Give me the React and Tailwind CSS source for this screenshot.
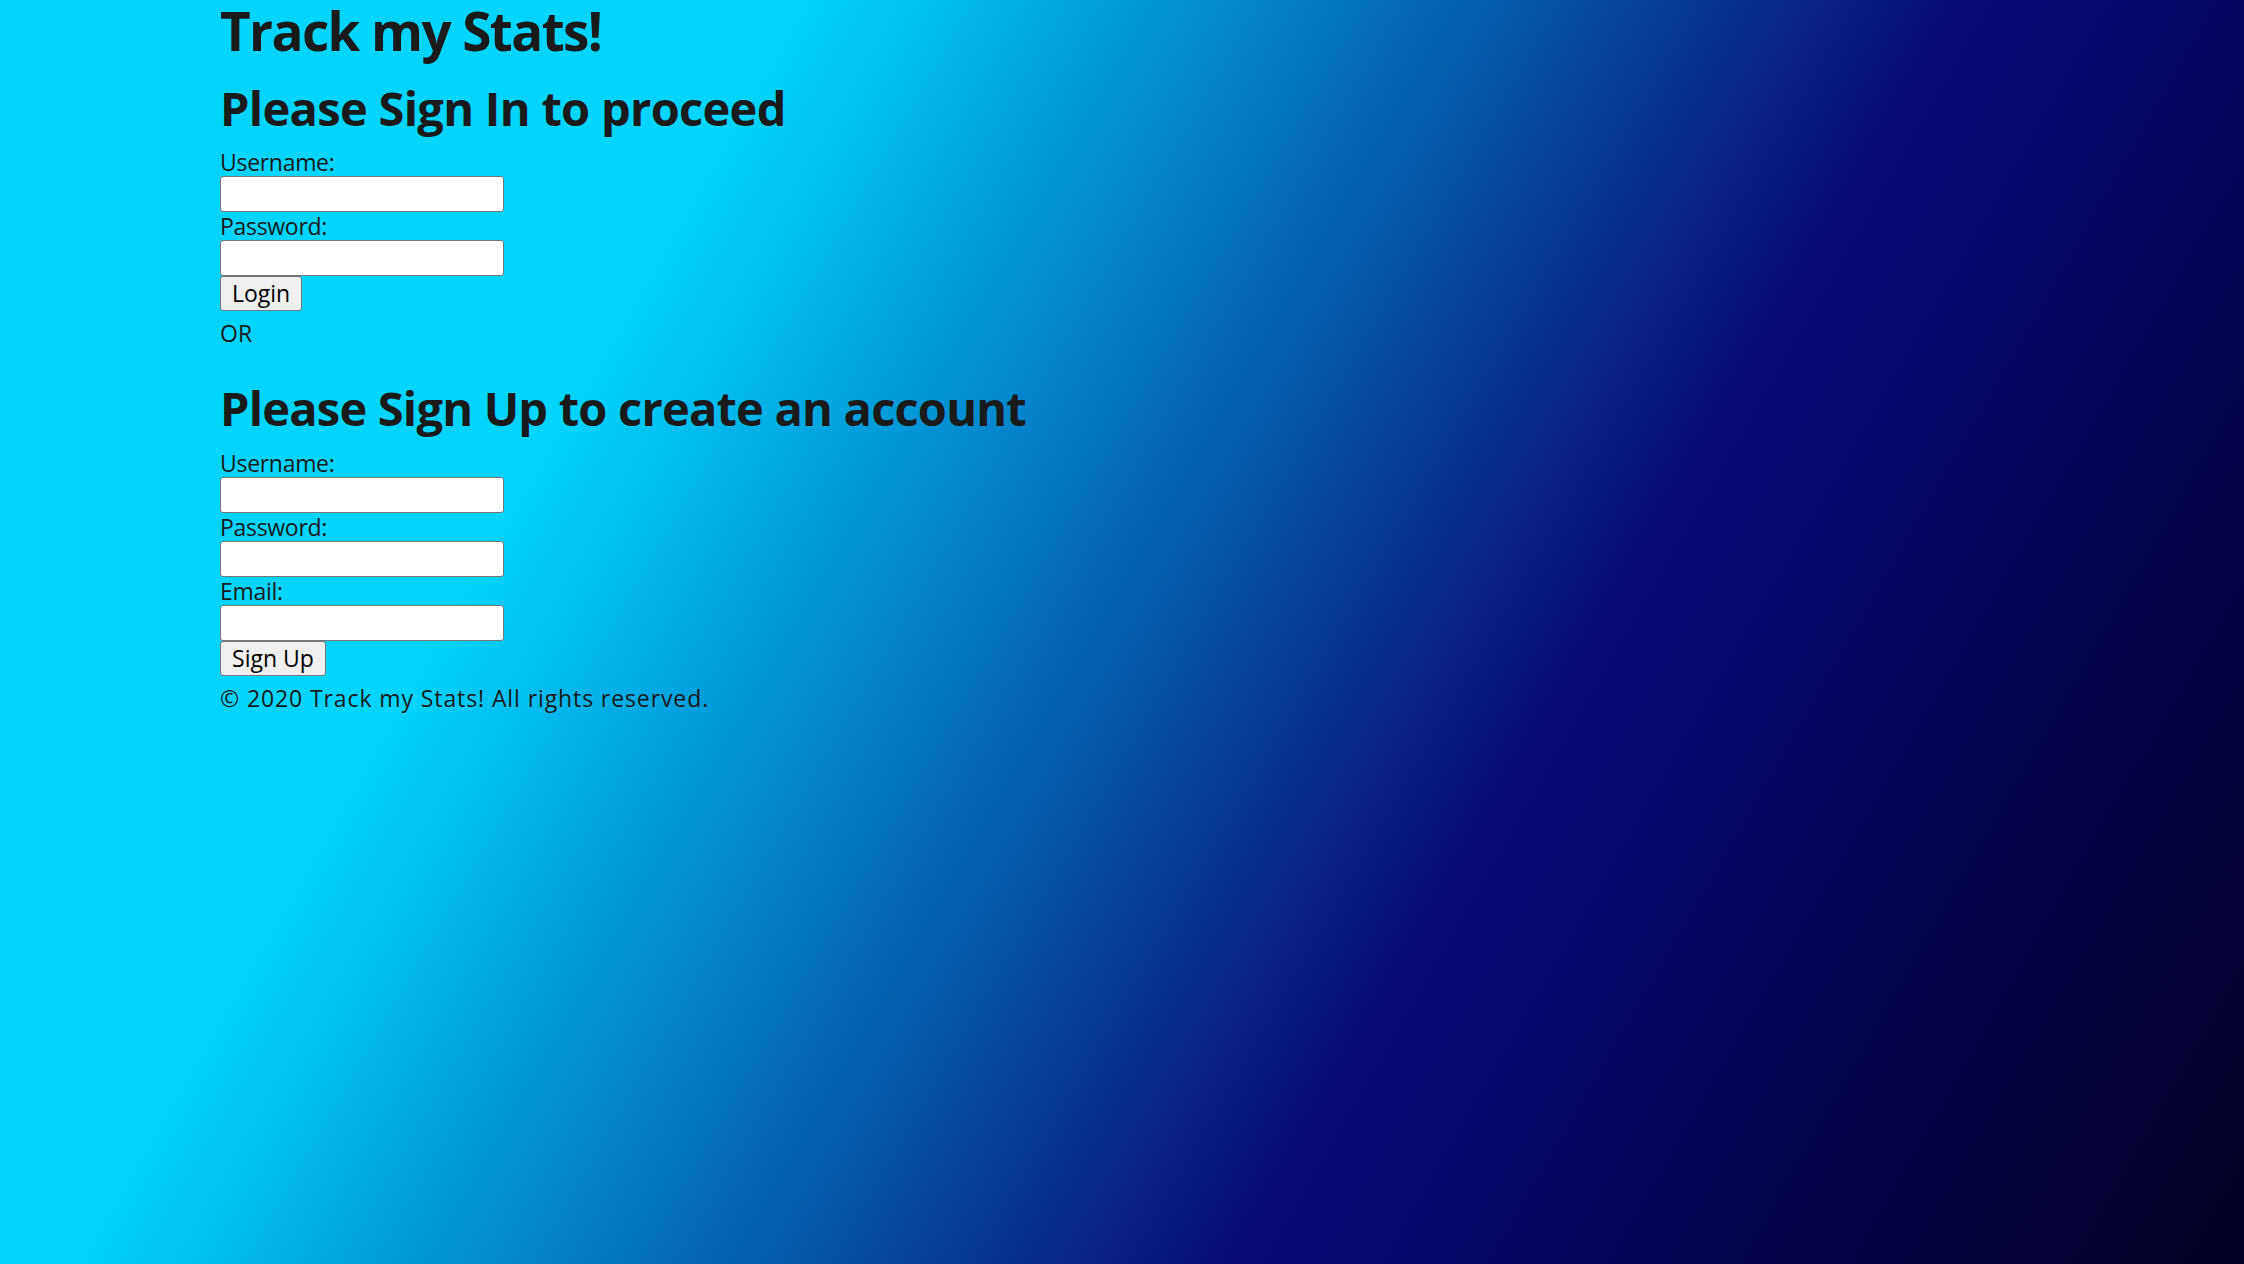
import React from "react";

const font = { fontFamily: '"Open Sans", "Noto Sans", sans-serif' };

function Label({ children }) {
  return (
    <label className="block h-[28px] text-[23px] leading-[28px] text-[#1a1a1a] whitespace-nowrap tracking-[-0.3px]">
      {children}
    </label>
  );
}

function Field() {
  return (
    <input
      type="text"
      className="block w-[284px] h-[36px] bg-white border border-[#767676] rounded-[3px] outline-none px-1"
    />
  );
}

function Button({ children, w }) {
  return (
    <button
      type="button"
      className={`block h-[35px] ${w} bg-[#efefef] border border-[#767676] rounded-[3px] text-[23px] leading-[33px] text-black text-center`}
    >
      {children}
    </button>
  );
}

export default function App() {
  return (
    <div
      className="min-h-screen w-full bg-[linear-gradient(120deg,#00d4ff_27%,#090979_66%,#020024_100%)]"
      style={font}
    >
      <div className="pl-[220px] pt-[2px] flex flex-col items-start">
        <h1 className="h-[58px] text-[53px] leading-[58px] font-bold text-[#1a1a1a] whitespace-nowrap tracking-[-1.6px]">
          Track my Stats!
        </h1>

        <h2 className="mt-[20px] h-[56px] text-[47px] leading-[56px] font-bold text-[#1a1a1a] whitespace-nowrap tracking-[-0.7px]">
          Please Sign In to proceed
        </h2>

        <form className="mt-[12px] flex flex-col items-start" onSubmit={(e) => e.preventDefault()}>
          <Label>Username:</Label>
          <Field />
          <Label>Password:</Label>
          <Field />
          <Button w="w-[82px]">Login</Button>
        </form>

        <p className="mt-[8px] h-[28px] text-[23px] leading-[28px] text-[#1a1a1a]">OR</p>

        <h2 className="mt-[33px] h-[56px] text-[47px] leading-[56px] font-bold text-[#1a1a1a] whitespace-nowrap tracking-[-0.8px]">
          Please Sign Up to create an account
        </h2>

        <form className="mt-[13px] flex flex-col items-start" onSubmit={(e) => e.preventDefault()}>
          <Label>Username:</Label>
          <Field />
          <Label>Password:</Label>
          <Field />
          <Label>Email:</Label>
          <Field />
          <Button w="w-[106px]">Sign Up</Button>
        </form>

        <footer className="mt-[8px] h-[28px] text-[23px] leading-[28px] text-[#1a1a1a] whitespace-nowrap tracking-[0.9px]">
          © 2020 Track my Stats! All rights reserved.
        </footer>
      </div>
    </div>
  );
}
